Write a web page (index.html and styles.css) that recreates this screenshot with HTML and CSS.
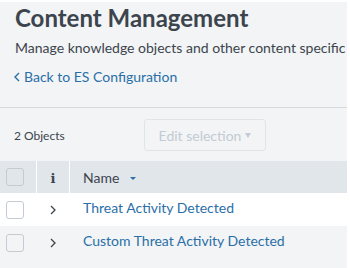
FILE: index.html
```html
<!DOCTYPE html>
<html lang="en">
<head>
  <meta charset="UTF-8">
  <title>Content Management</title>
  <link rel="stylesheet" href="styles.css">
</head>
<body>
  <div class="page">
    <header class="page-head">
      <h1 class="title">Content Management</h1>
      <p class="subtitle">Manage knowledge objects and other content specific</p>
      <a class="back" href="#">
        <svg class="back-icon" width="6" height="10" viewBox="0 0 6 10"><polyline points="5,1 1,5 5,9" /></svg>
        Back to ES Configuration
      </a>
    </header>

    <div class="toolbar">
      <span class="count">2 Objects</span>
      <button class="edit-btn" disabled>Edit selection<span class="caret caret-grey"></span></button>
    </div>

    <table class="grid">
      <thead>
        <tr>
          <th class="col-check"><span class="checkbox"></span></th>
          <th class="col-info"><span class="info">i</span></th>
          <th class="col-name">Name<span class="caret caret-blue"></span></th>
        </tr>
      </thead>
      <tbody>
        <tr class="row-odd">
          <td class="col-check"><span class="checkbox"></span></td>
          <td class="col-info"><svg class="expand" width="8" height="10" viewBox="0 0 8 10"><polyline points="2,1 6,5 2,9" /></svg></td>
          <td class="col-name"><a href="#">Threat Activity Detected</a></td>
        </tr>
        <tr class="row-even">
          <td class="col-check"><span class="checkbox"></span></td>
          <td class="col-info"><svg class="expand" width="8" height="10" viewBox="0 0 8 10"><polyline points="2,1 6,5 2,9" /></svg></td>
          <td class="col-name"><a href="#">Custom Threat Activity Detected</a></td>
        </tr>
      </tbody>
    </table>
  </div>
</body>
</html>
```

FILE: styles.css
```css
body {
  margin: 0;
  background: #fff;
  font-family: "Lato", "Liberation Sans", sans-serif;
  color: #3c444d;
}
.page {
  width: 347px;
  height: 266px;
  margin-top: 2px;
  background: #f2f4f5;
  overflow: hidden;
}
.page-head {
  padding: 0 0 0 15px;
  height: 105px;
  border-bottom: 1px solid #d6dadd;
}
.title {
  margin: 0;
  padding-top: 2px;
  font-size: 24px;
  line-height: 28px;
  font-weight: bold;
  color: #3c444d;
}
.subtitle {
  margin: 7px 0 0;
  font-size: 14px;
  line-height: 17px;
  white-space: nowrap;
}
.back {
  display: flex;
  align-items: center;
  gap: 4px;
  margin-top: 12px;
  margin-left: -1px;
  font-size: 14px;
  line-height: 17px;
  color: #2a6fa8;
  text-decoration: none;
}
.back-icon polyline {
  fill: none;
  stroke: #2a6fa8;
  stroke-width: 1.4;
}
.toolbar {
  display: flex;
  align-items: center;
  padding: 11px 0 10px 14px;
}
.count {
  width: 130px;
  font-size: 12px;
}
.edit-btn {
  display: flex;
  align-items: center;
  justify-content: center;
  gap: 4px;
  width: 122px;
  height: 32px;
  padding: 0;
  border: 1px solid #e1e5e8;
  border-radius: 3px;
  background: #f2f4f5;
  color: #c3cbd4;
  font-family: inherit;
  font-size: 14px;
}
.caret {
  display: inline-block;
  width: 0;
  height: 0;
  border-left: 3px solid transparent;
  border-right: 3px solid transparent;
}
.caret-grey {
  border-top: 5px solid #c3cbd4;
}
.caret-blue {
  margin-left: 11px;
  border-top: 3px solid #2a6fa8;
  vertical-align: middle;
}
.grid {
  width: 100%;
  border-collapse: collapse;
  font-size: 14px;
}
.grid th {
  height: 32px;
  padding: 0;
  background: #e1e6eb;
  font-weight: normal;
  text-align: left;
}
.grid td {
  height: 33px;
  padding: 0;
}
.grid th + th,
.grid td + td {
  border-left: 1px solid #fff;
}
.row-odd td {
  background: #fff;
}
.row-even td + td {
  border-left-color: #f2f4f5;
}
.col-check {
  width: 36px;
}
.col-check .checkbox {
  display: block;
  width: 16px;
  height: 16px;
  margin-left: 6px;
  border: 1px solid #c3cbd4;
  border-radius: 3px;
}
.grid .col-info {
  width: 32px;
  text-align: center;
}
.info {
  font-family: "DejaVu Serif", serif;
  font-weight: bold;
  font-size: 13px;
}
.expand {
  display: block;
  margin-left: 12px;
}
.expand polyline {
  fill: none;
  stroke: #3c444d;
  stroke-width: 1.3;
}
.grid .col-name {
  padding-left: 13px;
}
.col-name a {
  display: block;
  margin-bottom: 4px;
  color: #2a6fa8;
  text-decoration: none;
}
```
